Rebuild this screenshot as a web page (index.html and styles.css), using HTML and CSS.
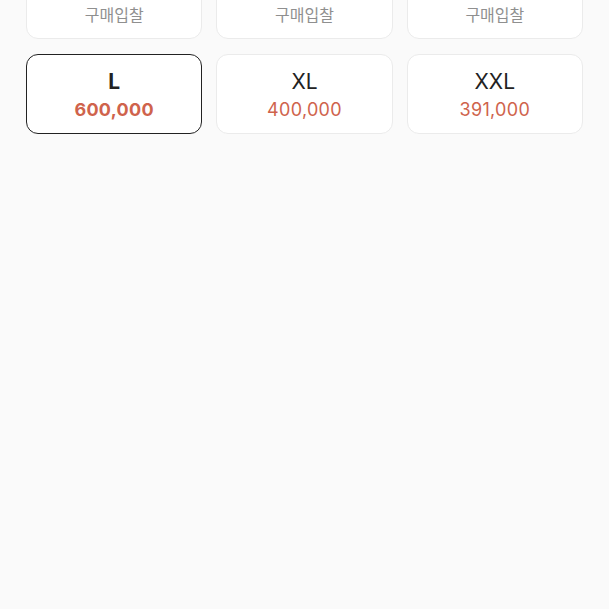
FILE: index.html
```html
<!DOCTYPE html>
<html lang="ko">
<head>
    <meta charset="UTF-8">
    <meta name="viewport" content="width=device-width, initial-scale=1.0">
    <title>사이즈 선택</title>
    <link rel="stylesheet" href="styles.css">
</head>
<body>
    <div class="size-grid">
        <!-- first row is scrolled past the top, only the bid label shows -->
        <div class="size-card">
            <p class="size-name"></p>
            <p class="size-price muted">구매입찰</p>
        </div>
        <div class="size-card">
            <p class="size-name"></p>
            <p class="size-price muted">구매입찰</p>
        </div>
        <div class="size-card">
            <p class="size-name"></p>
            <p class="size-price muted">구매입찰</p>
        </div>
        <div class="size-card selected">
            <p class="size-name">L</p>
            <p class="size-price">600,000</p>
        </div>
        <div class="size-card">
            <p class="size-name">XL</p>
            <p class="size-price">400,000</p>
        </div>
        <div class="size-card">
            <p class="size-name">XXL</p>
            <p class="size-price">391,000</p>
        </div>
    </div>
</body>
</html>
```

FILE: styles.css
```css
:root {
    --page-bg: #fafafa;
    --card-bg: #ffffff;
    --card-border: #ebebeb;
    --text-color: #222222;
    --muted-color: #8f8f8f;
    --price-color: #cf634c;
}

body {
    margin: 0;
    background-color: var(--page-bg);
    font-family: 'Inter', 'Noto Sans CJK KR', sans-serif;
    color: var(--text-color);
}

/* Size grid (list is scrolled, first row partly above the fold) */
.size-grid {
    display: grid;
    grid-template-columns: repeat(3, 1fr);
    gap: 15px 14px;
    padding: 0 26px;
    margin-top: -41px;
}

.size-card {
    height: 80px;
    padding-top: 4px;
    background-color: var(--card-bg);
    border: 1px solid var(--card-border);
    border-radius: 12px;
    display: flex;
    flex-direction: column;
    align-items: center;
    justify-content: center;
    gap: 4px;
    box-sizing: border-box;
}

.size-card p {
    margin: 0;
}

.size-name {
    font-size: 21px;
    line-height: 24px;
    min-height: 24px;
}

.size-price {
    font-size: 18px;
    line-height: 24px;
    color: var(--price-color);
    letter-spacing: 0.3px;
}

.size-price.muted {
    font-size: 16px;
    color: var(--muted-color);
    letter-spacing: 0;
}

/* Selected size */
.size-card.selected {
    border: 1.5px solid var(--text-color);
}

.size-card.selected .size-name,
.size-card.selected .size-price {
    font-weight: 700;
}
```
